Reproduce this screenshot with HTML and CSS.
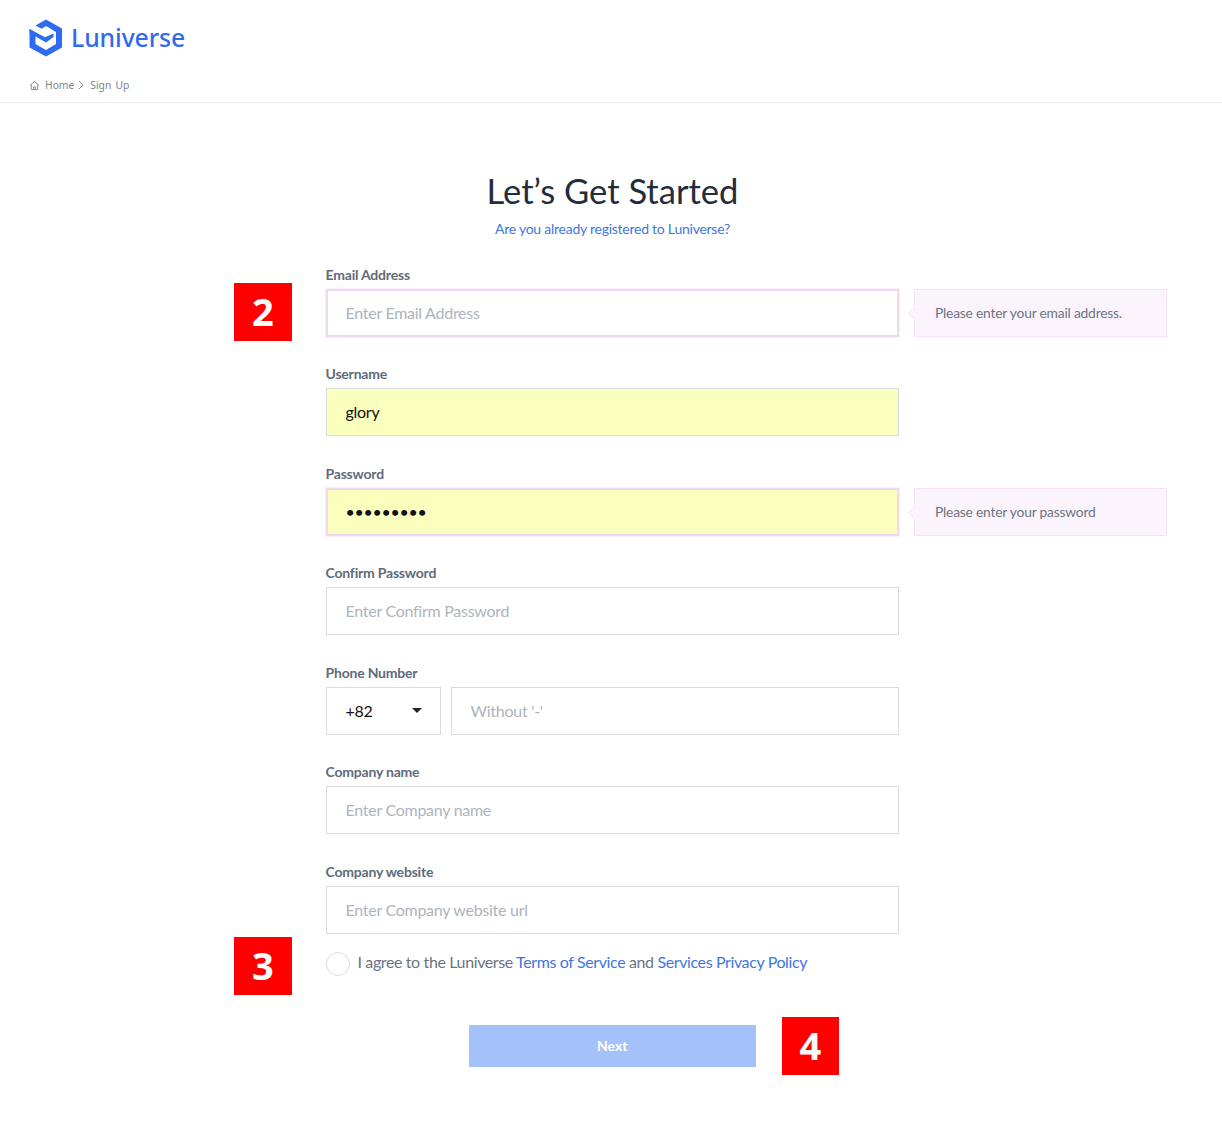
FILE: index.html
```html
<!DOCTYPE html>
<html lang="en">
<head>
    <meta charset="UTF-8">
    <meta name="viewport" content="width=device-width, initial-scale=1.0">
    <title>Luniverse Sign Up</title>
    <link rel="stylesheet" href="styles.css">
</head>
<body>
    <header class="top">
        <div class="logo">
            <svg class="logo-mark" width="34" height="38" viewBox="0 0 34 38">
                <path d="M17 0.5 L33 9.5 V28.5 L17 37.5 L0.5 28.5 V10 L6.5 13.5 V25 L17 31 L27 25 V13 L17 7 L12.5 9.7 L6.5 6.5 Z" fill="#2f6bf0"/>
                <path d="M0.5 10 L16 18.3 L24.5 14.5 V18 L17 23.5 L0.5 14 Z" fill="#2f6bf0"/>
            </svg>
            <span class="logo-text">Luniverse</span>
        </div>
        <div class="crumbs">
            <svg width="11" height="11" viewBox="0 0 12 12" fill="none" stroke="#7b8490" stroke-width="1">
                <path d="M1 6 L6 1.5 L11 6 M2.5 5 V10.5 H9.5 V5 M5 10.5 V7.5 H7 V10.5"/>
            </svg>
            <span>Home</span>
            <svg width="6" height="10" viewBox="0 0 6 10" fill="none" stroke="#7b8490" stroke-width="1">
                <path d="M1 1 L5 5 L1 9"/>
            </svg>
            <span class="crumb-last">Sign Up</span>
        </div>
    </header>

    <main class="signup">
        <h1>Let’s Get Started</h1>
        <a class="already" href="#">Are you already registered to Luniverse?</a>

        <form class="form">
            <div class="mark mark-2">2</div>
            <div class="mark mark-3">3</div>
            <div class="mark mark-4">4</div>

            <div class="field">
                <label for="email">Email Address</label>
                <input class="box invalid" type="text" id="email" placeholder="Enter Email Address">
                <div class="tip">Please enter your email address.</div>
            </div>
            <div class="field">
                <label for="username">Username</label>
                <input class="box filled" type="text" id="username" value="glory">
            </div>
            <div class="field">
                <label for="password">Password</label>
                <input class="box filled invalid" type="password" id="password" value="123456789">
                <div class="tip">Please enter your password</div>
            </div>
            <div class="field">
                <label for="confirm">Confirm Password</label>
                <input class="box" type="text" id="confirm" placeholder="Enter Confirm Password">
            </div>
            <div class="field">
                <label for="phone">Phone Number</label>
                <div class="phone">
                    <div class="box code">+82<span class="caret"></span></div>
                    <input class="box" type="text" id="phone" placeholder="Without '-'">
                </div>
            </div>
            <div class="field">
                <label for="company">Company name</label>
                <input class="box" type="text" id="company" placeholder="Enter Company name">
            </div>
            <div class="field">
                <label for="website">Company website</label>
                <input class="box" type="text" id="website" placeholder="Enter Company website url">
            </div>

            <div class="agree">
                <span class="radio"></span>
                <span class="agree-text">I agree to the Luniverse <a href="#">Terms of Service</a> and <a href="#">Services Privacy Policy</a></span>
            </div>

            <div class="actions">
                <button class="next" type="button">Next</button>
            </div>
        </form>
    </main>
</body>
</html>
```

FILE: styles.css
```css
* {
    box-sizing: border-box;
}
body {
    margin: 0;
    background: #fff;
    font-family: "Lato", "Open Sans", sans-serif;
    color: #5f6b7a;
}
.top {
    height: 103px;
    padding: 18px 29px 0;
    border-bottom: 1px solid #eef0f2;
}
.logo {
    display: flex;
    align-items: center;
    gap: 8px;
    height: 40px;
}
.logo-text {
    margin-bottom: 2px;
    font-family: "Noto Sans", sans-serif;
    font-size: 24.8px;
    font-weight: 500;
    letter-spacing: -0.1px;
    color: #2f6bf0;
}
.crumbs {
    display: flex;
    align-items: center;
    gap: 4px;
    margin-top: 20px;
    font-family: "Noto Sans", sans-serif;
    font-size: 10.3px;
    color: #7b8490;
}
.crumbs svg:first-child {
    margin-right: 1px;
}
.crumb-last {
    margin-left: 2px;
    word-spacing: 1.5px;
}
.signup {
    padding: 67px 0 58px 3px;
    text-align: center;
}
h1 {
    margin: 0;
    font-size: 34.6px;
    font-weight: 400;
    line-height: 41px;
    color: #232d3b;
}
.already {
    display: block;
    margin-top: 8px;
    font-size: 14px;
    line-height: 20px;
    letter-spacing: -0.25px;
    color: #3f76e0;
    text-decoration: none;
}
.form {
    position: relative;
    width: 842px;
    margin: 26.5px 0 0 322.5px;
    text-align: left;
}
.mark {
    position: absolute;
    width: 57.5px;
    height: 57.5px;
    background: #ff0000;
    color: #fff;
    font-family: "Open Sans", sans-serif;
    font-size: 38px;
    font-weight: 700;
    line-height: 56px;
    text-align: center;
}
.mark-2 {
    left: -91.5px;
    top: 17.5px;
}
.mark-3 {
    left: -91.5px;
    top: 671.5px;
}
.mark-4 {
    left: 456px;
    top: 751.5px;
}
.field {
    display: grid;
    grid-template-columns: 573.5px 252.5px;
    column-gap: 15px;
    row-gap: 6px;
    margin-bottom: 28.5px;
}
.field label {
    grid-column: 1 / -1;
    font-size: 14px;
    font-weight: 700;
    line-height: 17px;
    letter-spacing: -0.2px;
    color: #5f6b7a;
}
.box {
    width: 100%;
    height: 48px;
    padding: 0 19px 1px;
    border: 1px solid #d9dcdf;
    border-radius: 0;
    outline: none;
    background: #fff;
    font-family: "Lato", sans-serif;
    font-size: 16px;
    letter-spacing: -0.27px;
    color: #111;
}
.box::placeholder {
    color: #adb4bd;
    opacity: 1;
}
.filled {
    background: #faffbd;
}
.invalid {
    border: 2px solid #f1d8f1;
    box-shadow: 0 0 0 1px #f9eef9;
    padding: 0 18px 1px;
}
.tip {
    position: relative;
    display: flex;
    align-items: center;
    height: 48px;
    padding: 0 0 1px 20px;
    background: #fcf4fd;
    border: 1px solid #f8e2f8;
    font-size: 13.8px;
    letter-spacing: -0.2px;
    color: #6a7482;
}
.tip::before {
    content: "";
    position: absolute;
    left: -5px;
    top: 19px;
    width: 8px;
    height: 8px;
    background: #fcf4fd;
    border-left: 1px solid #f8e2f8;
    border-bottom: 1px solid #f8e2f8;
    transform: rotate(45deg);
}
.phone {
    display: flex;
    gap: 10px;
    grid-column: 1;
}
.code {
    display: flex;
    align-items: center;
    justify-content: space-between;
    flex: 0 0 115px;
    padding-right: 18px;
}
.caret {
    width: 0;
    height: 0;
    border-left: 5px solid transparent;
    border-right: 5px solid transparent;
    border-top: 5px solid #1d232c;
}
.agree {
    display: flex;
    align-items: flex-start;
    gap: 8px;
    margin-top: -10px;
    font-size: 16px;
    line-height: 20px;
    letter-spacing: -0.38px;
    color: #6a7482;
}
.agree a {
    color: #3f76e0;
    text-decoration: none;
}
.radio {
    width: 24px;
    height: 24px;
    border: 1px solid #d9dcdf;
    border-radius: 50%;
}
.actions {
    width: 573.5px;
    margin-top: 49px;
    display: flex;
    justify-content: center;
}
.next {
    width: 287px;
    height: 42px;
    padding: 0 0 2px;
    border: none;
    background: #a4c2f9;
    color: #fff;
    font-family: "Lato", sans-serif;
    font-size: 14px;
    font-weight: 700;
}
```
